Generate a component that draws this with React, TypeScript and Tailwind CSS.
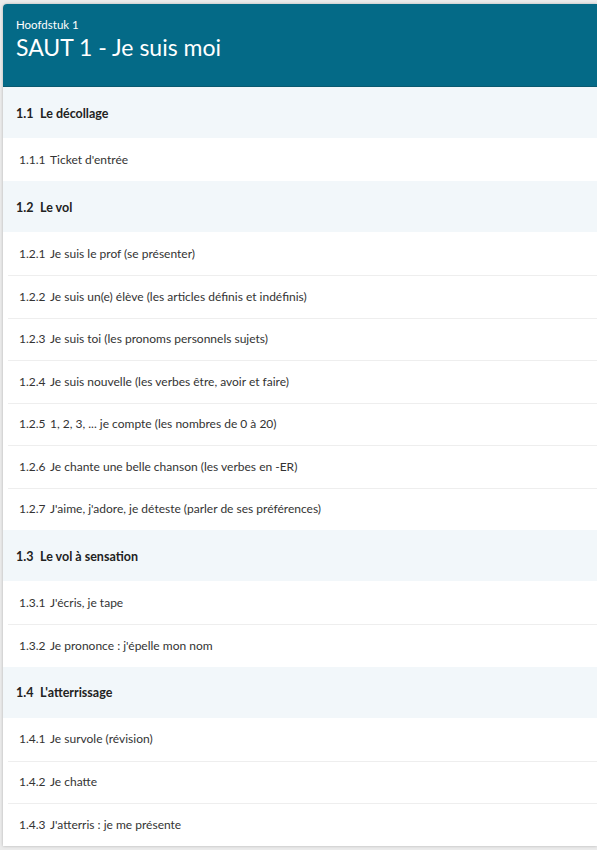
const sections = [
  {
    num: '1.1',
    title: 'Le décollage',
    items: [['1.1.1', "Ticket d'entrée"]],
  },
  {
    num: '1.2',
    title: 'Le vol',
    items: [
      ['1.2.1', 'Je suis le prof (se présenter)'],
      ['1.2.2', 'Je suis un(e) élève (les articles définis et indéfinis)'],
      ['1.2.3', 'Je suis toi (les pronoms personnels sujets)'],
      ['1.2.4', 'Je suis nouvelle (les verbes être, avoir et faire)'],
      ['1.2.5', '1, 2, 3, ... je compte (les nombres de 0 à 20)'],
      ['1.2.6', 'Je chante une belle chanson (les verbes en -ER)'],
      ['1.2.7', "J'aime, j'adore, je déteste (parler de ses préférences)"],
    ],
  },
  {
    num: '1.3',
    title: 'Le vol à sensation',
    items: [
      ['1.3.1', "J'écris, je tape"],
      ['1.3.2', "Je prononce : j'épelle mon nom"],
    ],
  },
  {
    num: '1.4',
    title: "L'atterrissage",
    items: [
      ['1.4.1', 'Je survole (révision)'],
      ['1.4.2', 'Je chatte'],
      ['1.4.3', "J'atterris : je me présente"],
    ],
  },
];

export default function App() {
  return (
    <div className="min-h-[850px] bg-[#ebebeb] pt-1 pl-[3px] font-['Lato',sans-serif]">
      <div className="bg-white rounded-tl shadow-[0_0_3px_rgba(0,0,0,0.25)] overflow-hidden">
        {/* Header */}
        <div className="bg-[#046a87] h-[83px] px-[13px] pt-[14px] text-white border-b border-[#0a5a70]">
          <div className="text-[11.5px] leading-[14px]">Hoofdstuk 1</div>
          <h1 className="text-[23px] leading-[30px]">SAUT 1 - Je suis moi</h1>
        </div>

        {sections.map((s) => (
          <div key={s.num}>
            <div className="bg-[#f2f7fa] h-[51px] flex items-center pl-[13px] pt-[3px] text-[12.5px] font-bold text-[#222] border-t border-[#e6ecef] first:border-t-0">
              <span className="w-[24px]">{s.num}</span>
              <span>{s.title}</span>
            </div>
            {s.items.map(([n, t], i) => (
              <div key={n} className={i > 0 ? 'ml-[5px] border-t border-[#eeeeee]' : 'ml-[5px]'}>
                <div className={i > 0 ? 'h-[41.5px] flex items-center pl-[11px] text-[12px] text-[#333]' : 'h-[43px] flex items-center pl-[11px] text-[12px] text-[#333]'}>
                  <span className="w-[31px]">{n}</span>
                  <span>{t}</span>
                </div>
              </div>
            ))}
          </div>
        ))}
      </div>
    </div>
  );
}
